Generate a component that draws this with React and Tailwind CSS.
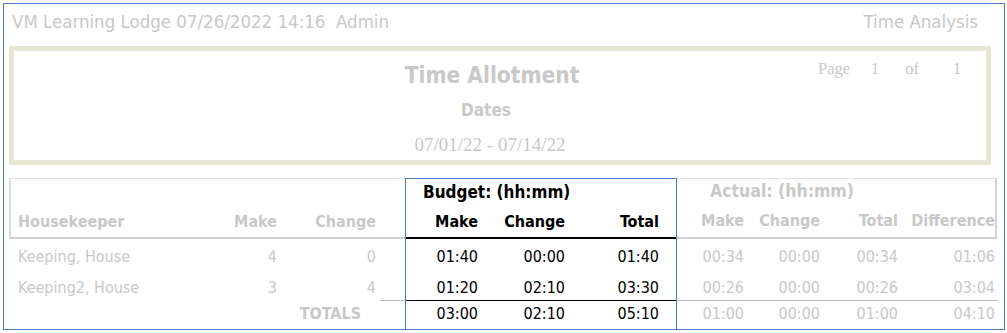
// App.jsx
const SANS = "font-['DejaVu_Sans_Condensed','DejaVu_Sans',sans-serif]";
const SERIF = "font-['Liberation_Serif','Times_New_Roman',serif]";

const rows = [
  { name: 'Keeping, House', make: 4, change: 0, budget: ['01:40', '00:00', '01:40'], actual: ['00:34', '00:00', '00:34', '01:06'] },
  { name: 'Keeping2, House', make: 3, change: 4, budget: ['01:20', '02:10', '03:30'], actual: ['00:26', '00:00', '00:26', '03:04'] }
];

const totals = { budget: ['03:00', '02:10', '05:10'], actual: ['01:00', '00:00', '01:00', '04:10'] };

const LeftBlock = () => (
  <div className="w-[396px] flex flex-col text-[#c8c8c8]">
    <div className="h-[61px] flex flex-col border-l-2 border-t border-b-2 border-l-[#dcdcdc] border-t-[#e2e2e2] border-b-[#cfcfcf]">
      <div className="h-[26px]" />
      <div className="flex items-center h-[32px] font-bold pt-[2px]">
        <div className="w-[186px] pl-[7px]">Housekeeper</div>
        <div className="w-[85px] text-right pr-[5px]">Make</div>
        <div className="w-[98px] text-right pr-[4px]">Change</div>
        <div className="w-[25px]" />
      </div>
    </div>
    {rows.map((r) => (
      <div key={r.name} className={`flex items-center ${r.make === 4 ? 'h-[32px]' : 'h-[29px]'} pt-[4px]`}>
        <div className="w-[188px] pl-[9px]">{r.name}</div>
        <div className="w-[85px] text-right pr-[5px]">{r.make}</div>
        <div className="w-[98px] text-right pr-[4px]">{r.change}</div>
        <div className="w-[25px]" />
      </div>
    ))}
    <div className="flex h-[29px]">
      <div className="w-[371px] border-t border-transparent flex items-center justify-end pr-[19px] font-bold pb-[2px]">TOTALS</div>
      <div className="w-[25px] border-t border-[#bdbdbd]" />
    </div>
  </div>
);

const BudgetBlock = () => (
  <div className="w-[272px] flex flex-col border-x border-t border-[#4a7dbf] text-black">
    <div className="h-[26px] flex items-center pl-[17px] font-bold text-[17px]">Budget: (hh:mm)</div>
    <div className="h-[32px] flex items-center font-bold pt-[2px]">
      <div className="w-[76px] text-right pr-[4px]">Make</div>
      <div className="w-[85px] text-right pr-[2px]">Change</div>
      <div className="w-[93px] text-right pr-[1px] whitespace-nowrap">Total</div>
      <div className="w-[16px]" />
    </div>
    <div className="h-[2px] bg-black" />
    {rows.map((r) => (
      <div key={r.name} className={`flex items-center ${r.make === 4 ? 'h-[32px]' : 'h-[29px]'} pt-[4px]`}>
        <div className="w-[76px] text-right pr-[4px]">{r.budget[0]}</div>
        <div className="w-[85px] text-right pr-[2px]">{r.budget[1]}</div>
        <div className="w-[93px] text-right pr-[1px]">{r.budget[2]}</div>
        <div className="w-[16px]" />
      </div>
    ))}
    <div className="flex items-center h-[29px] border-t border-black pb-[2px]">
      <div className="w-[76px] text-right pr-[4px]">{totals.budget[0]}</div>
      <div className="w-[85px] text-right pr-[2px]">{totals.budget[1]}</div>
      <div className="w-[93px] text-right pr-[1px]">{totals.budget[2]}</div>
      <div className="w-[16px]" />
    </div>
  </div>
);

const ActualCells = ({ values }) => (
  <>
    <div className="w-[72px] text-right pr-[5px]">{values[0]}</div>
    <div className="w-[76px] text-right pr-[5px]">{values[1]}</div>
    <div className="w-[78px] text-right pr-[5px]">{values[2]}</div>
    <div className="w-[92px] text-right">{values[3]}</div>
  </>
);

const ActualBlock = () => (
  <div className="w-[320px] flex flex-col text-[#c8c8c8]">
    <div className="h-[61px] flex flex-col border-r-2 border-t border-b-2 border-r-[#d4d4d4] border-t-[#e2e2e2] border-b-[#cfcfcf]">
      <div className="h-[25px] flex items-center pl-[33px] font-bold text-[17.5px]">Actual: (hh:mm)</div>
      <div className="h-[32px] flex items-center font-bold pt-[2px]">
        <ActualCells values={['Make', 'Change', 'Total', 'Difference']} />
      </div>
    </div>
    {rows.map((r) => (
      <div key={r.name} className={`flex items-center ${r.make === 4 ? 'h-[32px]' : 'h-[29px]'} pt-[4px]`}>
        <ActualCells values={r.actual} />
      </div>
    ))}
    <div className="flex items-center h-[29px] border-t border-[#bdbdbd] w-[321px] pb-[2px]">
      <ActualCells values={totals.actual} />
    </div>
  </div>
);

export default function App() {
  return (
    <div className={`${SANS} text-[16px] leading-none bg-white w-[1007px] h-[333px] pt-[3px] pl-[3px]`}>
      <div className="w-[1002px] h-[327px] border border-[#4a7dbf] flex flex-col">
        <div className="h-[42px] flex items-start justify-between pt-[9px] pl-[8px] pr-[26px] text-[18.5px] text-[#c8c8c8]">
          <span className="whitespace-pre">VM Learning Lodge 07/26/2022 14:16  Admin</span>
          <span>Time Analysis</span>
        </div>

        <div className="ml-[5px] w-[982px] h-[119px] border-[5px] border-[#e6e6d3] flex text-[#c8c8c8]">
          <div className="w-[326px]" />
          <div className="w-[300px] flex flex-col items-center">
            <div className="mt-[13px] text-[22.5px] font-bold ml-[4px]">Time Allotment</div>
            <div className="mt-[15px] text-[17px] font-bold mr-[8px]">Dates</div>
            <div className={`${SERIF} mt-[16px] text-[19px]`}>07/01/22 - 07/14/22</div>
          </div>
          <div className={`${SERIF} flex-1 flex items-start pt-[10px] pl-[178px] text-[16.5px]`}>
            <span>Page</span>
            <span className="ml-[21px]">1</span>
            <span className="ml-[26px]">of</span>
            <span className="ml-[34px]">1</span>
          </div>
        </div>

        <div className="mt-[13px] ml-[5px] flex">
          <LeftBlock />
          <BudgetBlock />
          <ActualBlock />
        </div>
      </div>
    </div>
  );
}
